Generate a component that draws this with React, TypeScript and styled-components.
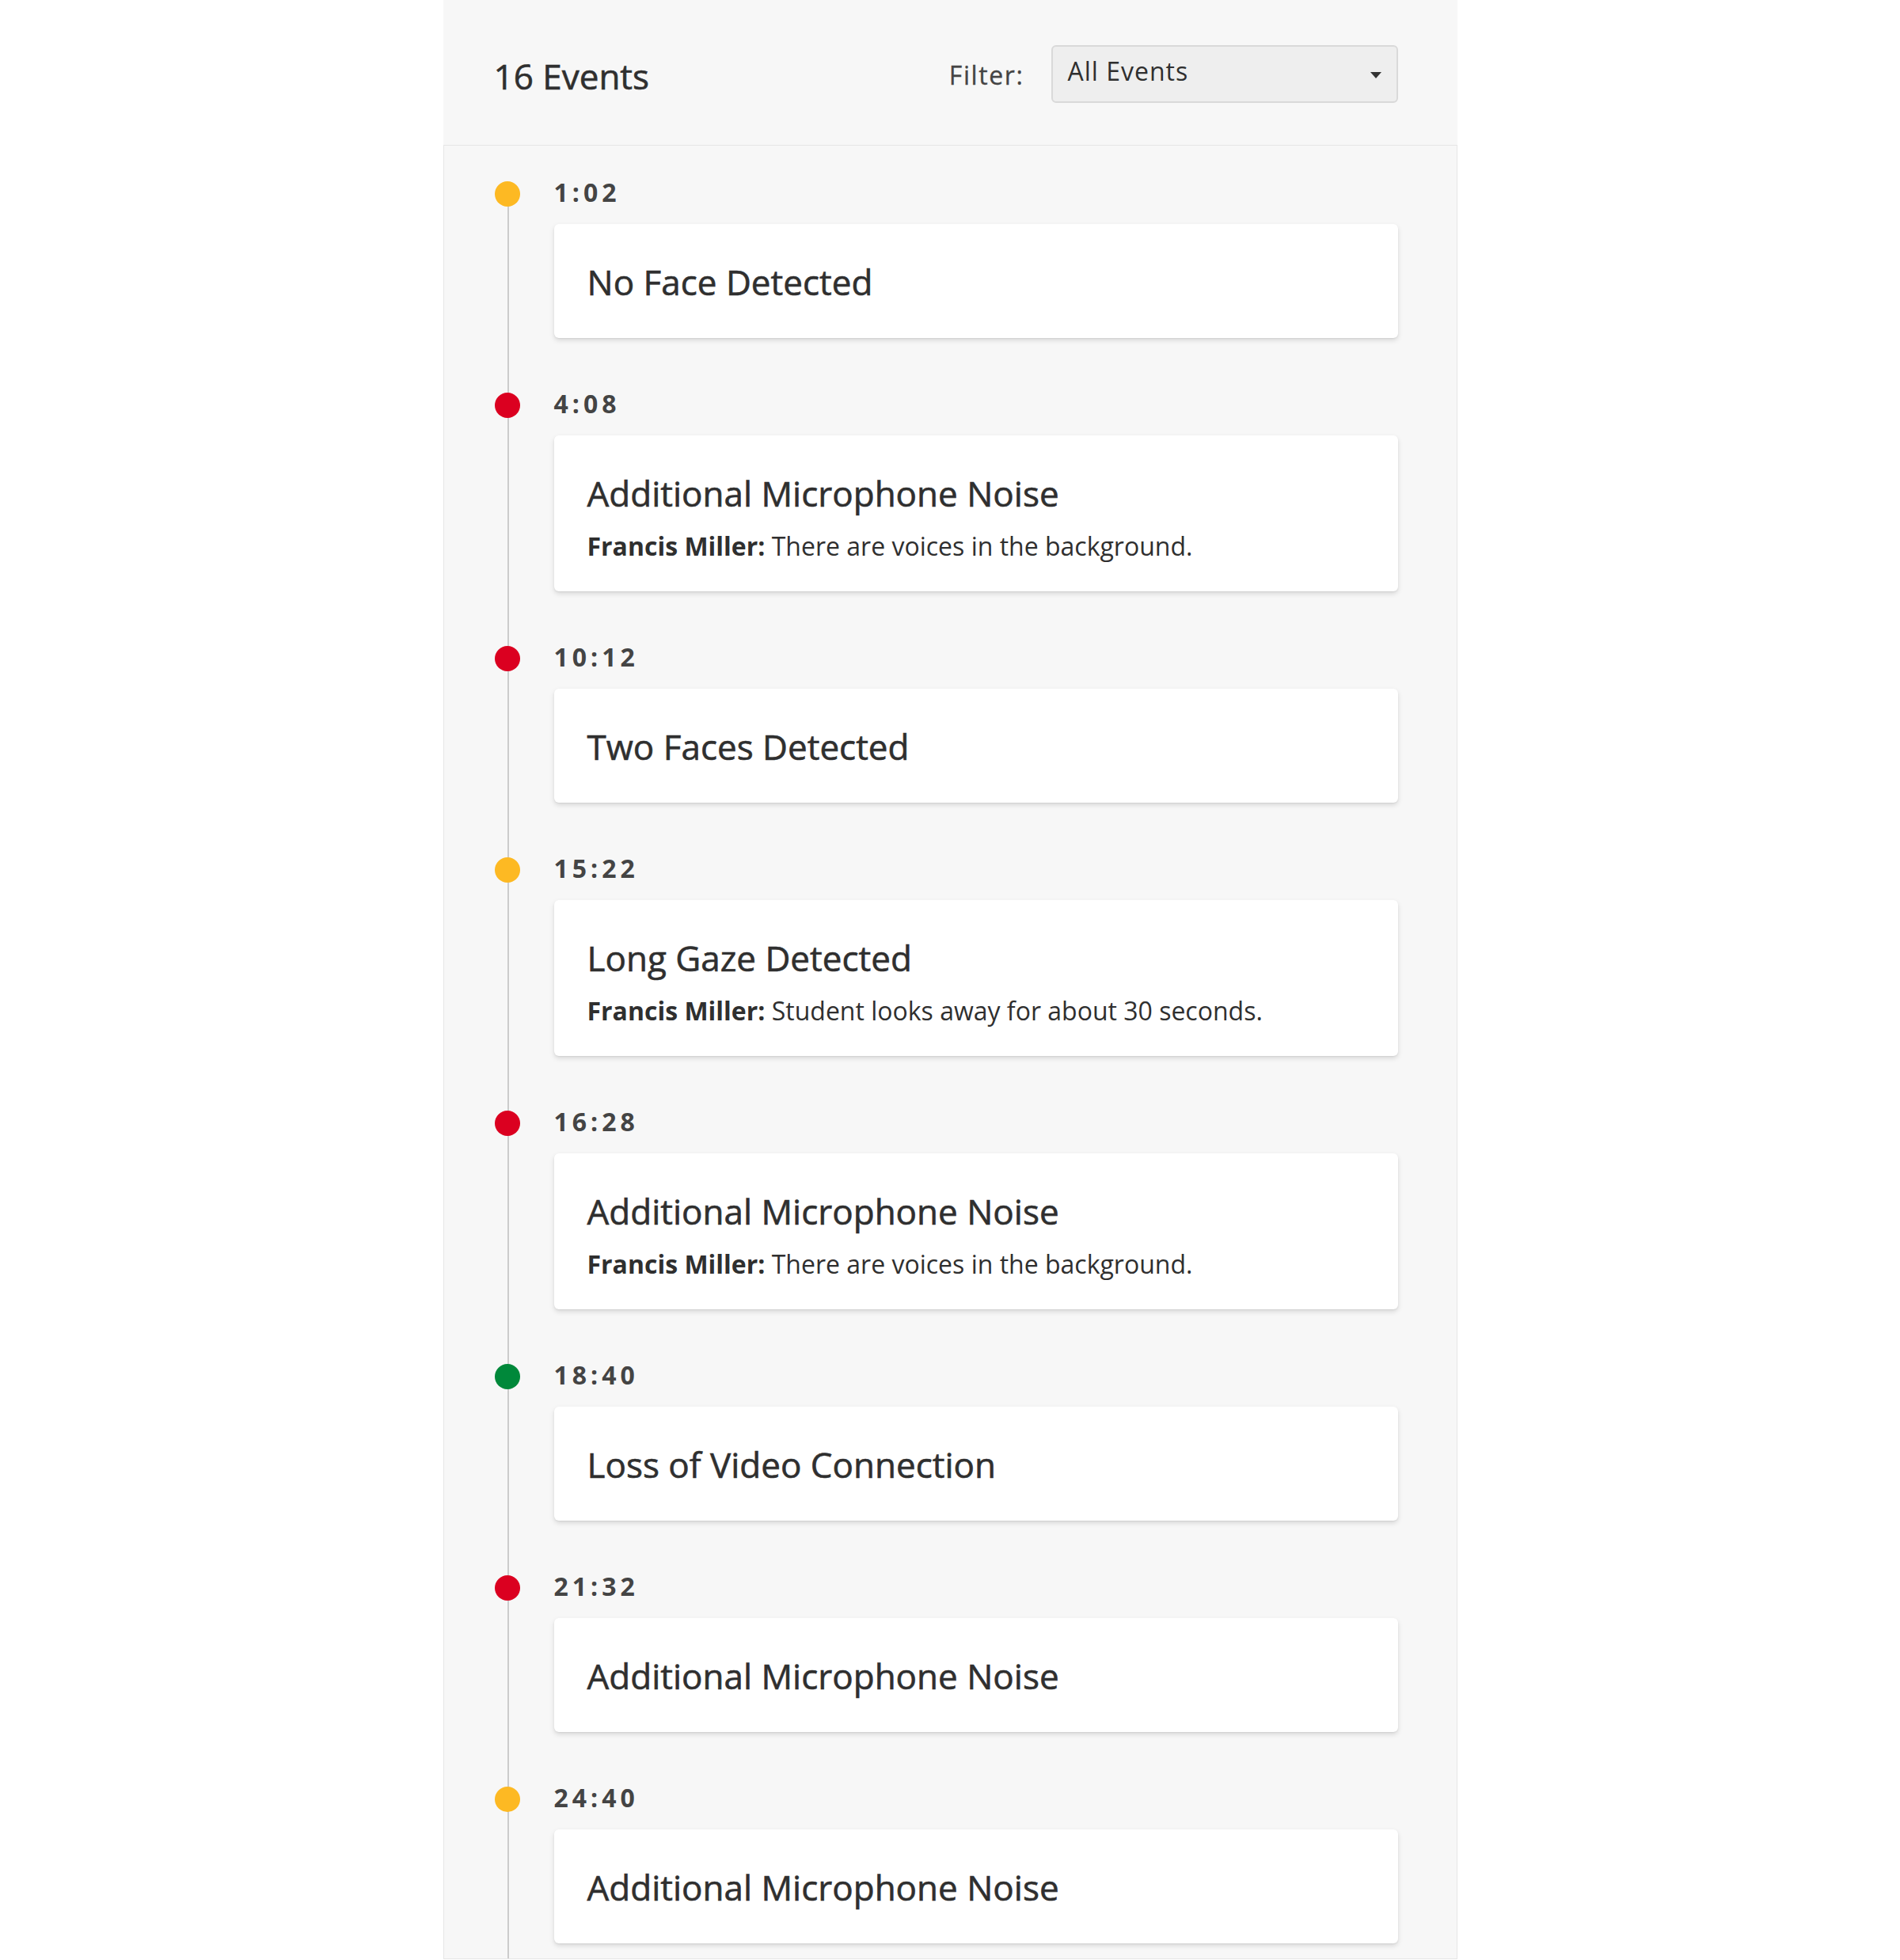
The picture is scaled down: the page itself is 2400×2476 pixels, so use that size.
import styled, { createGlobalStyle } from "styled-components";

const text = "#2f2f2f";
const yellow = "#fdb923";
const red = "#db0020";
const green = "#00883a";

const GlobalStyle = createGlobalStyle`
  html, body {
    margin: 0;
    padding: 0;
    background: #ffffff;
  }

  body {
    font-family: "Open Sans", "Noto Sans", sans-serif;
    color: ${text};
  }
`;

const Panel = styled.div`
  width: 1281px;
  margin: 0 auto;
`;

const Header = styled.header`
  height: 183px;
  box-sizing: border-box;
  padding: 6px 75px 0 64px;
  display: flex;
  align-items: center;
  justify-content: space-between;
  background: #f7f7f7;
`;

const Count = styled.h1`
  margin: 4px 0 0;
  font-size: 44px;
  font-weight: 400;
  line-height: 1.362;
  color: ${text};
  -webkit-text-stroke: 0.6px ${text};
`;

const FilterGroup = styled.div`
  display: flex;
  align-items: center;
  gap: 34px;
`;

const FilterLabel = styled.span`
  font-size: 32px;
  letter-spacing: 1.6px;
  color: #444;
  -webkit-text-stroke: 0.3px #444;
`;

const Select = styled.div`
  width: 438px;
  height: 73px;
  box-sizing: border-box;
  margin-top: -2px;
  padding: 0 19px 8px 19px;
  display: flex;
  align-items: center;
  justify-content: space-between;
  border: 2px solid #d9d9d9;
  border-radius: 6px;
  background: #eeeeee;
  font-size: 32px;
  letter-spacing: 1px;
  color: ${text};
`;

const Caret = styled.svg`
  width: 14px;
  height: 8px;
  margin-top: 10px;
  fill: #333;
`;

const List = styled.section`
  box-sizing: border-box;
  padding: 35px 74px 19px 64px;
  display: flex;
  flex-direction: column;
  gap: 59px;
  border: 1px solid #e6e6e6;
  background: linear-gradient(#cccccc, #cccccc) no-repeat 80px 61px / 2px
      calc(100% - 61px),
    #f7f7f7;
`;

const Item = styled.article`
  display: grid;
  grid-template-columns: 32px 1fr;
  column-gap: 43px;
  row-gap: 16px;
`;

const Dot = styled.span<{ $color: string }>`
  width: 32px;
  height: 32px;
  margin-top: 10px;
  border-radius: 50%;
  background: ${(p) => p.$color};
`;

const Time = styled.div`
  font-size: 32px;
  font-weight: 700;
  line-height: 48px;
  letter-spacing: 5px;
  color: #444;
`;

const Card = styled.div`
  grid-column: 2;
  min-height: 144px;
  box-sizing: border-box;
  padding: 40px 42px 37px;
  background: #ffffff;
  border-radius: 6px;
  box-shadow: 0 3px 6px rgba(0, 0, 0, 0.13), 0 1px 2px rgba(0, 0, 0, 0.06);
`;

const Title = styled.h2`
  margin: 0;
  font-size: 44px;
  font-weight: 400;
  line-height: 66px;
  color: ${text};
  -webkit-text-stroke: 0.6px ${text};
`;

const Note = styled.p`
  margin: 14px 0 0;
  font-size: 32px;
  line-height: 40px;
  color: ${text};

  b {
    font-weight: 700;
  }
`;

type Event = {
  time: string;
  color: string;
  title: string;
  note?: string;
};

const events: Event[] = [
  { time: "1:02", color: yellow, title: "No Face Detected" },
  {
    time: "4:08",
    color: red,
    title: "Additional Microphone Noise",
    note: "There are voices in the background.",
  },
  { time: "10:12", color: red, title: "Two Faces Detected" },
  {
    time: "15:22",
    color: yellow,
    title: "Long Gaze Detected",
    note: "Student looks away for about 30 seconds.",
  },
  {
    time: "16:28",
    color: red,
    title: "Additional Microphone Noise",
    note: "There are voices in the background.",
  },
  { time: "18:40", color: green, title: "Loss of Video Connection" },
  { time: "21:32", color: red, title: "Additional Microphone Noise" },
  { time: "24:40", color: yellow, title: "Additional Microphone Noise" },
];

export default function App() {
  return (
    <>
      <GlobalStyle />
      <Panel>
        <Header>
          <Count>16 Events</Count>
          <FilterGroup>
            <FilterLabel>Filter:</FilterLabel>
            <Select>
              All Events
              <Caret viewBox="0 0 14 8">
                <path d="M0 0h14L7 8z" />
              </Caret>
            </Select>
          </FilterGroup>
        </Header>
        <List>
          {events.map((e, i) => (
            <Item key={i}>
              <Dot $color={e.color} />
              <Time>{e.time}</Time>
              <Card>
                <Title>{e.title}</Title>
                {e.note && (
                  <Note>
                    <b>Francis Miller:</b> {e.note}
                  </Note>
                )}
              </Card>
            </Item>
          ))}
        </List>
      </Panel>
    </>
  );
}
